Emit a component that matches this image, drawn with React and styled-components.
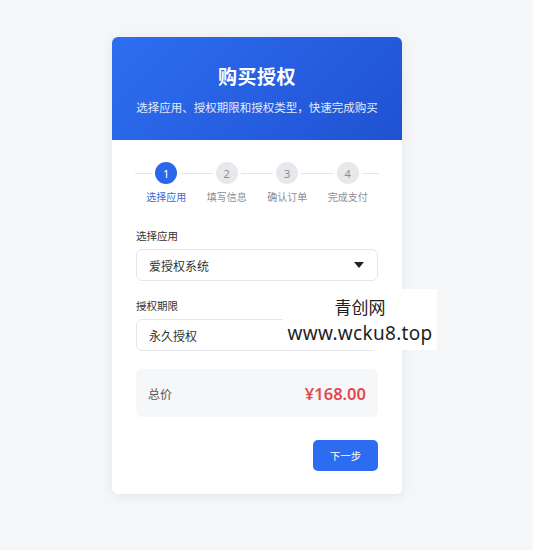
import React from "react";
import styled, { createGlobalStyle } from "styled-components";

const Global = createGlobalStyle`
  html, body { margin: 0; padding: 0; background: #f5f6f8; }
  body { font-family: "Noto Sans CJK SC", "Noto Sans", sans-serif; }
  * { box-sizing: border-box; }
`;

const Page = styled.div`
  position: relative;
  width: 533px;
  height: 550px;
  padding: 37px 0 0 112px;
`;

const Card = styled.div`
  width: 290px;
  background: #fff;
  border-radius: 6px;
  box-shadow: 0 2px 12px rgba(30, 40, 80, 0.08);
  overflow: hidden;
`;

const Header = styled.div`
  height: 103px;
  background: linear-gradient(135deg, #2e6ef1 0%, #1f52d2 100%);
  display: flex;
  flex-direction: column;
  align-items: center;
  justify-content: flex-start;
  padding-top: 24px;
  color: #fff;
`;

const Title = styled.div`
  font-size: 19px;
  font-weight: 700;
  line-height: 30px;
  letter-spacing: 0.5px;
`;

const Subtitle = styled.div`
  margin-top: 7px;
  font-size: 11.5px;
  line-height: 18px;
  color: #e3ebff;
`;

const Body = styled.div`
  padding: 22px 24px 23px;
`;

const Steps = styled.div`
  position: relative;
  display: grid;
  grid-template-columns: repeat(4, 1fr);
  &::before {
    content: "";
    position: absolute;
    left: -1px;
    right: -1px;
    top: 10.5px;
    height: 1px;
    background: #e3e5e9;
  }
`;

const Step = styled.div`
  position: relative;
  display: flex;
  flex-direction: column;
  align-items: center;
`;

const Dot = styled.div`
  width: 22px;
  height: 22px;
  border-radius: 50%;
  display: flex;
  align-items: center;
  justify-content: center;
  font-size: 11px;
  font-family: "Noto Sans", sans-serif;
  background: ${(p) => (p.$active ? "#2a67ea" : "#e6e8ec")};
  color: ${(p) => (p.$active ? "#fff" : "#8a8f98")};
  box-shadow: 0 0 0 3px #fff;
`;

const StepLabel = styled.div`
  margin-top: 7px;
  font-size: 10px;
  line-height: 12px;
  color: ${(p) => (p.$active ? "#3a6ad6" : "#8b8f96")};
`;

const Field = styled.div`
  margin-top: ${(p) => p.$mt}px;
`;

const Label = styled.div`
  font-size: 10.5px;
  line-height: 14px;
  color: #333;
  margin-bottom: 6px;
`;

const Box = styled.div`
  height: 32px;
  border: 1px solid #e4e6ea;
  border-radius: 6px;
  display: flex;
  align-items: center;
  justify-content: space-between;
  padding: 0 13px 0 12px;
  font-size: 12px;
  color: #333;
  background: #fff;
`;

const Caret = styled.span`
  width: 0;
  height: 0;
  border-left: 5px solid transparent;
  border-right: 5px solid transparent;
  border-top: 6px solid #222;
`;

const Total = styled.div`
  margin-top: 18px;
  height: 48px;
  background: #f6f7f9;
  border-radius: 6px;
  display: flex;
  align-items: center;
  justify-content: space-between;
  padding: 0 12px;
`;

const TotalLabel = styled.span`
  font-size: 12px;
  color: #555;
`;

const Price = styled.span`
  font-family: "Noto Sans", "Open Sans", sans-serif;
  font-size: 16.5px;
  font-weight: 600;
  color: #e4484f;
`;

const Actions = styled.div`
  margin-top: 23px;
  display: flex;
  justify-content: flex-end;
`;

const Button = styled.button`
  width: 65px;
  height: 31px;
  border: none;
  border-radius: 5px;
  background: #2b6cf0;
  color: #fff;
  font-family: "Noto Sans CJK SC", sans-serif;
  font-size: 10.5px;
  cursor: pointer;
`;

const Watermark = styled.div`
  position: absolute;
  left: 283px;
  top: 289px;
  width: 154px;
  height: 61px;
  background: #fff;
  display: flex;
  flex-direction: column;
  align-items: center;
  justify-content: center;
  color: #1f1f1f;
  font-family: "Noto Sans CJK SC", "Noto Sans", sans-serif;
  line-height: 26px;
`;

const WmTitle = styled.span`
  font-size: 17px;
`;

const WmUrl = styled.span`
  font-family: "Noto Sans", sans-serif;
  font-size: 19px;
  letter-spacing: 0.3px;
`;

const steps = ["选择应用", "填写信息", "确认订单", "完成支付"];

export default function App() {
  return (
    <Page>
      <Global />
      <Card>
        <Header>
          <Title>购买授权</Title>
          <Subtitle>选择应用、授权期限和授权类型，快速完成购买</Subtitle>
        </Header>
        <Body>
          <Steps>
            {steps.map((s, i) => (
              <Step key={s}>
                <Dot $active={i === 0}>{i + 1}</Dot>
                <StepLabel $active={i === 0}>{s}</StepLabel>
              </Step>
            ))}
          </Steps>
          <Field $mt={26}>
            <Label>选择应用</Label>
            <Box>
              <span>爱授权系统</span>
              <Caret />
            </Box>
          </Field>
          <Field $mt={18}>
            <Label>授权期限</Label>
            <Box>
              <span>永久授权</span>
            </Box>
          </Field>
          <Total>
            <TotalLabel>总价</TotalLabel>
            <Price>¥168.00</Price>
          </Total>
          <Actions>
            <Button>下一步</Button>
          </Actions>
        </Body>
      </Card>
      <Watermark>
        <WmTitle>青创网</WmTitle>
        <WmUrl>www.wcku8.top</WmUrl>
      </Watermark>
    </Page>
  );
}
